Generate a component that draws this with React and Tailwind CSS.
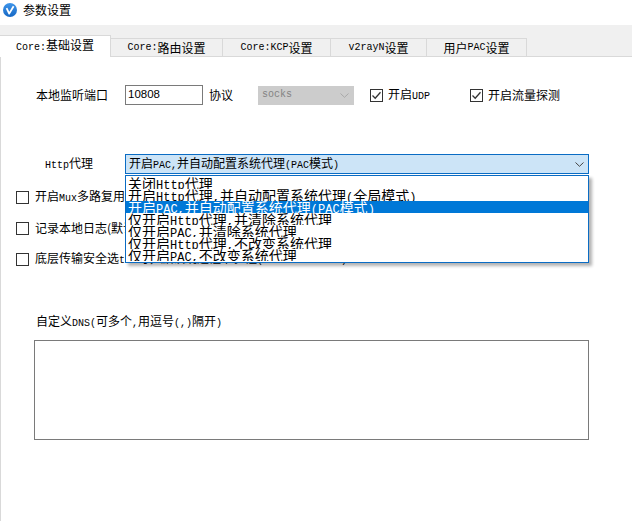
import React from "react";

const CJK = /[\u2e80-\u9fff\uff00-\uffef\u3000-\u303f]/;

function T({ text, mono = "font-['Liberation_Mono'] text-[10px]" }) {
  const runs = [];
  let cur = "";
  let curCjk = null;
  for (const ch of text) {
    const c = CJK.test(ch);
    if (curCjk === null || c === curCjk) {
      cur += ch;
    } else {
      runs.push([cur, curCjk]);
      cur = ch;
    }
    curCjk = c;
  }
  if (cur) runs.push([cur, curCjk]);
  return (
    <>
      {runs.map(([s, c], i) =>
        c ? (
          <span key={i}>{s}</span>
        ) : (
          <span key={i} className={mono}>
            {s}
          </span>
        )
      )}
    </>
  );
}

function Check({ checked }) {
  return (
    <span className="flex h-[13px] w-[13px] shrink-0 items-center justify-center border border-[#333333] bg-white">
      {checked && (
        <svg width="11" height="11" viewBox="0 0 11 11">
          <polyline points="1.5,5.5 4.2,8.2 9.5,2.2" fill="none" stroke="#333333" strokeWidth="1.3" />
        </svg>
      )}
    </span>
  );
}

function Chevron({ color }) {
  return (
    <svg width="9" height="5" viewBox="0 0 9 5">
      <polyline points="0.5,0.5 4.5,4.3 8.5,0.5" fill="none" stroke={color} strokeWidth="1" />
    </svg>
  );
}

const tabs = [
  { t: "Core:基础设置", w: 111, active: true },
  { t: "Core:路由设置", w: 112 },
  { t: "Core:KCP设置", w: 108 },
  { t: "v2rayN设置", w: 96 },
  { t: "用户PAC设置", w: 100 },
];

const items = [
  "关闭Http代理",
  "开启Http代理,并自动配置系统代理(全局模式)",
  "开启PAC,并自动配置系统代理(PAC模式)",
  "仅开启Http代理,并清除系统代理",
  "仅开启PAC,并清除系统代理",
  "仅开启Http代理,不改变系统代理",
  "仅开启PAC,不改变系统代理",
];

export default function App() {
  return (
    <div className="relative flex h-[521px] w-[632px] flex-col overflow-hidden bg-white font-['Noto_Sans_CJK_SC',sans-serif] text-[12px] leading-none text-black">
      {/* title bar */}
      <div className="flex h-[25px] shrink-0 items-center bg-white">
        <div className="ml-[3px] mt-[-6px]">
          <svg width="14" height="14" viewBox="0 0 14 14">
            <defs>
              <linearGradient id="g" x1="0" y1="0" x2="0" y2="1">
                <stop offset="0" stopColor="#3f95ea" />
                <stop offset="1" stopColor="#1668c4" />
              </linearGradient>
            </defs>
            <circle cx="7" cy="7" r="7" fill="url(#g)" />
            <path d="M3.6 5.2 L6.2 10.6 L10.6 3.2" fill="none" stroke="#ffffff" strokeWidth="1.8" strokeLinejoin="round" />
          </svg>
        </div>
        <span className="ml-[6px] mt-[-6px]">参数设置</span>
      </div>

      {/* tab strip */}
      <div className="flex h-[31px] shrink-0 items-end bg-[#f0f0f0]">
        {tabs.map((tab, i) =>
          tab.active ? (
            <div
              key={i}
              className="z-10 mb-[-1px] flex h-[22px] w-[111px] items-center justify-center border-t border-r border-[#d9d9d9] bg-white"
            >
              <span className="mt-[-2px]">
                <T text={tab.t} />
              </span>
            </div>
          ) : (
            <div
              key={i}
              style={{ width: tab.w }}
              className="flex h-[18px] items-center justify-center border-t border-r border-[#d9d9d9] bg-[#f0f0f0]"
            >
              <T text={tab.t} />
            </div>
          )
        )}
      </div>

      {/* content */}
      <div className="relative flex-1 border-t border-l border-[#d9d9d9] bg-white">
        {/* row 1 */}
        <div className="mt-[28px] flex h-[20px] items-center">
          <span className="ml-[35px] w-[89px]">本地监听端口</span>
          <div className="flex h-[20px] w-[78px] items-center border border-[#7a7a7a] pl-[2px] font-['Liberation_Sans',sans-serif] text-[11.5px]">
            10808
          </div>
          <span className="ml-[6px]">协议</span>
          <div className="ml-[25px] flex h-[19px] w-[96px] items-center justify-between border border-[#cccccc] bg-[#cccccc] pl-[3px] pr-[4px] text-[#838383]">
            <span className="font-['Liberation_Mono'] text-[10px]">socks</span>
            <Chevron color="#a8a8a8" />
          </div>
          <div className="ml-[16px] flex items-center">
            <Check checked />
            <span className="ml-[5px]">
              <T text="开启UDP" />
            </span>
          </div>
          <div className="ml-[40px] flex items-center">
            <Check checked />
            <span className="ml-[5px]">开启流量探测</span>
          </div>
        </div>

        {/* http row */}
        <div className="mt-[49px] flex h-[20px] items-center">
          <span className="ml-[44px] w-[80px]">
            <T text="Http代理" />
          </span>
          <div className="flex h-[20px] w-[464px] items-center justify-between border border-[#0a6cc4] bg-[#cce4f7] pl-[3px] pr-[4px]">
            <span>
              <T text="开启PAC,并自动配置系统代理(PAC模式)" />
            </span>
            <Chevron color="#444444" />
          </div>
        </div>

        {/* checkbox rows */}
        <div className="mt-[16px] flex flex-col gap-[17px] pl-[15px]">
          <div className="flex h-[14px] items-center">
            <Check />
            <span className="ml-[6px] whitespace-nowrap">
              <T text="开启Mux多路复用(默认开启)" />
            </span>
          </div>
          <div className="flex h-[14px] items-center">
            <Check />
            <span className="ml-[6px] whitespace-nowrap">记录本地日志(默认关闭)</span>
          </div>
          <div className="flex h-[14px] items-center">
            <Check />
            <span className="ml-[6px] whitespace-nowrap">
              <T text="底层传输安全选tls时，默认跳过证书验证(allowInsecure)" />
            </span>
          </div>
        </div>

        {/* DNS */}
        <div className="ml-[35px] mt-[49px]">
          <T text="自定义DNS(可多个,用逗号(,)隔开)" />
        </div>
        <div className="ml-[33px] mt-[11px] h-[100px] w-[555px] border border-[#7a7a7a] bg-white" />

        {/* dropdown list overlay */}
        <div className="absolute left-[124px] top-[118px] w-[464px] border border-[#0a6cc4] bg-white py-[1px] shadow-[3px_3px_3px_rgba(0,0,0,0.3)]">
          {items.map((it, i) => (
            <div
              key={i}
              className={
                i === 2
                  ? "h-[12px] overflow-hidden whitespace-nowrap bg-[#0078d7] pl-[2px] text-[14px] leading-[12px] text-white"
                  : "h-[12px] overflow-hidden whitespace-nowrap pl-[2px] text-[14px] leading-[12px] text-black"
              }
            >
              <T text={it} mono="font-['Liberation_Mono'] text-[12px]" />
            </div>
          ))}
        </div>
      </div>
    </div>
  );
}
